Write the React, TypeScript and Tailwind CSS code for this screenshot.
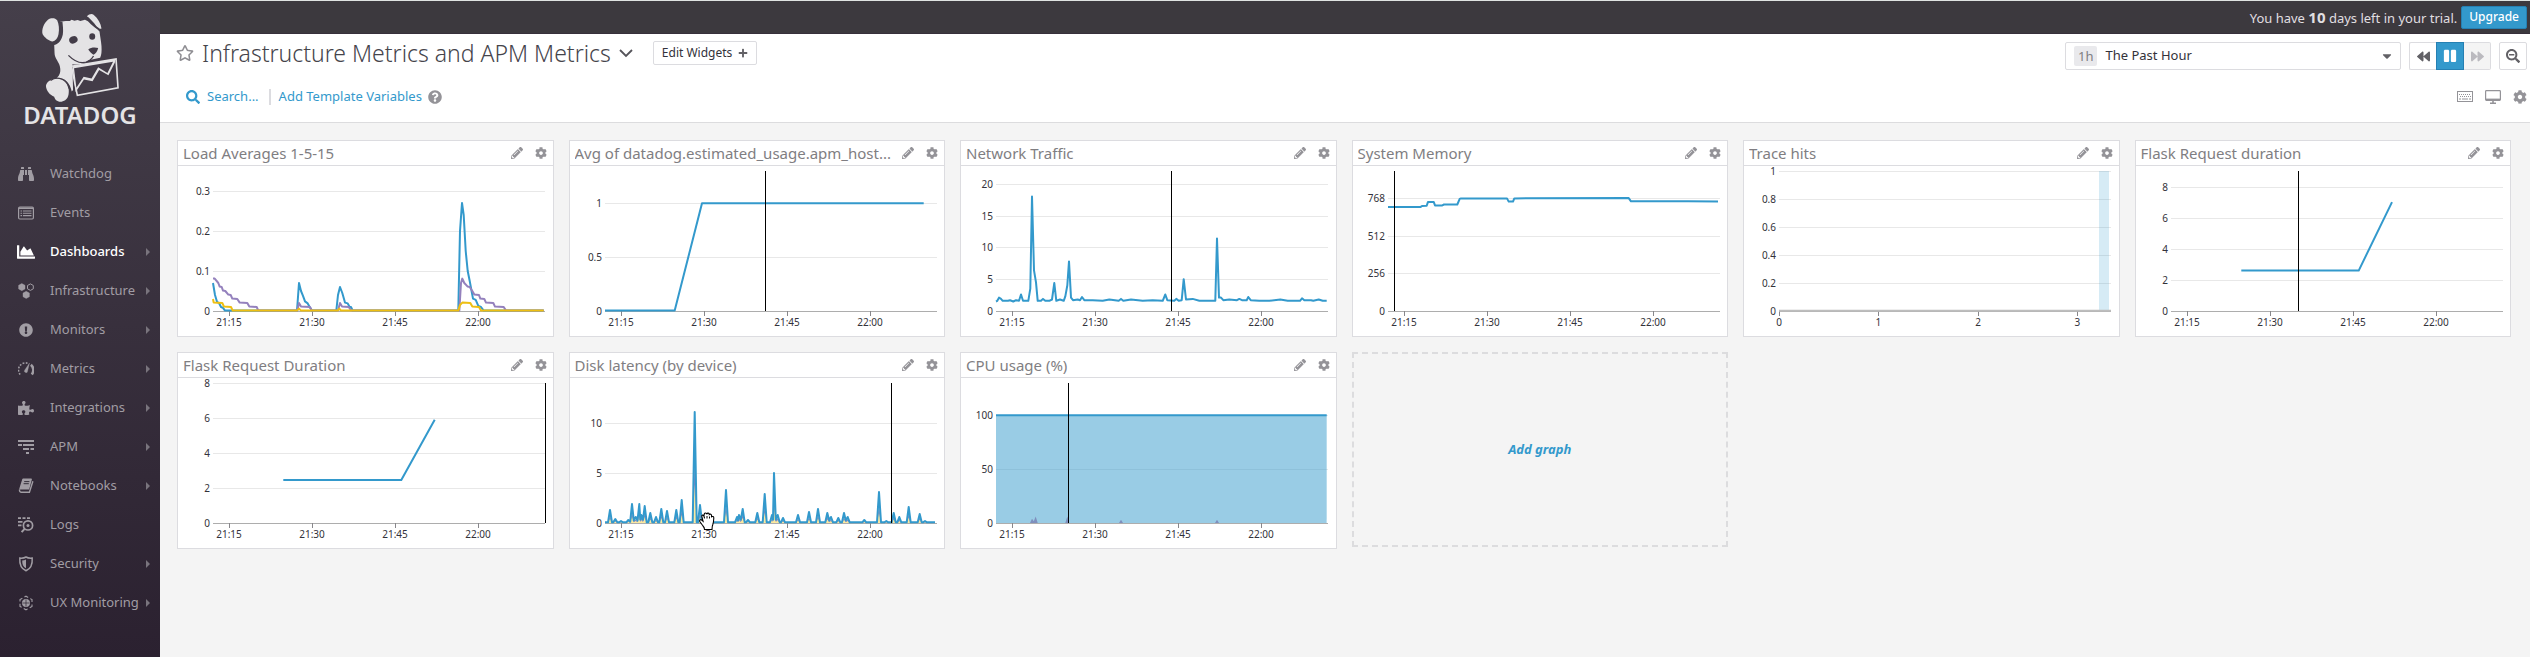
import { useEffect, useRef, useState } from "react";
import type { ReactNode } from "react";
import {
  FaBackward,
  FaBinoculars,
  FaCaretDown,
  FaChartArea,
  FaCog,
  FaExclamationCircle,
  FaForward,
  FaPause,
  FaPencilAlt,
  FaPlus,
  FaPuzzlePiece,
  FaQuestionCircle,
  FaRegStar,
  FaSearch,
  FaSearchMinus,
} from "react-icons/fa";

/* ---------- icons ---------- */

const EventsIcon = () => (
  <svg viewBox="0 0 16 16" className="h-4 w-4" fill="none" stroke="currentColor">
    <rect x="0.6" y="2" width="14.8" height="12" rx="1.2" strokeWidth="1.2" />
    <path d="M1 3.2h14" strokeWidth="1.6" />
    <path d="M2.5 6h1.6M5 6h8.5M2.5 8.3h1.6M5 8.3h8.5M2.5 10.6h1.6M5 10.6h8.5" strokeWidth="1.1" />
  </svg>
);

const InfrastructureIcon = () => (
  <svg viewBox="0 0 16 16" className="h-4 w-4" fill="currentColor" stroke="currentColor">
    <path d="M3.8.5 7 2.3v3.6L3.8 7.7.6 5.9V2.3z" strokeWidth=".4" />
    <path d="M12.4.9 15.3 2.5v3.3l-2.9 1.6-2.9-1.6V2.5z" fill="none" strokeWidth="1" />
    <path d="m8.2 8.3 3.2 1.8v3.6l-3.2 1.8L5 13.7v-3.6z" strokeWidth=".4" />
  </svg>
);

const MetricsIcon = () => (
  <svg viewBox="0 0 16 16" className="h-4 w-4" fill="none" stroke="currentColor">
    <path d="M2.2 13.5A7 7 0 0 1 9.5 2.2" strokeWidth="1.6" strokeDasharray="1.8 1.4" />
    <path d="M12.9 3.8a7 7 0 0 1 .9 9.7" strokeWidth="2.6" />
    <path d="M11.5 2 9.6 10a1.6 1.6 0 1 1-3-.8z" fill="currentColor" strokeWidth=".3" />
  </svg>
);

const ApmIcon = () => (
  <svg viewBox="0 0 16 16" className="h-4 w-4" fill="currentColor">
    <path d="M0 1h16v2H0zM0 5h4v2H0zM5 5h11v2H5zM5 9h6v2H5zM12.5 9H16v2h-3.5zM8 13h3v2H8z" />
  </svg>
);

const NotebookIcon = () => (
  <svg viewBox="0 0 16 16" className="h-4 w-4" fill="none" stroke="currentColor">
    <path d="M5 1.2h8.2l-2.6 9.6H2z" fill="currentColor" strokeWidth="1.4" strokeLinejoin="round" />
    <path d="M1.6 11.4c-.4 1.8.4 2.8 1.4 2.8h8.4l3.5-11" strokeWidth="1.4" />
    <path d="M6.2 3.6h5.2M5.6 5.7h5.2" stroke="#36303b" strokeWidth="1" />
  </svg>
);

const LogsIcon = () => (
  <svg viewBox="0 0 16 16" className="h-4 w-4" fill="none" stroke="currentColor">
    <path d="M0 1.2h3M4.5 1.2h3M9 1.2h3M0 4.8h4.5M0 8.4h3.5" strokeWidth="1.8" />
    <circle cx="10" cy="8.4" r="4.6" strokeWidth="1.7" />
    <path d="m6.6 11.8-3 3.4" strokeWidth="2" />
    <circle cx="10" cy="8.4" r="1.5" fill="currentColor" stroke="none" />
  </svg>
);

const SecurityIcon = () => (
  <svg viewBox="0 0 16 16" className="h-4 w-4" fill="none" stroke="currentColor">
    <path d="M8 1c2 1.2 4 1.3 6.2 1.1C14.6 8 13.5 12.5 8 14.8 2.5 12.5 1.4 8 1.8 2.1 4 2.3 6 2.2 8 1z" strokeWidth="1.5" />
    <path d="M8 3.4v8.9C5 10.9 4.2 8.2 4.2 4.4 5.6 4.4 6.8 4.1 8 3.4z" fill="currentColor" stroke="none" />
  </svg>
);

const UxIcon = () => (
  <svg viewBox="0 0 16 16" className="h-4 w-4" fill="none" stroke="currentColor">
    <path d="m8 1.2 6 3.4v6.8l-6 3.4-6-3.4V4.6z" strokeWidth="1.1" strokeDasharray="4.5 2.4" strokeDashoffset="2" />
    <circle cx="8" cy="8" r="3.7" fill="currentColor" strokeWidth=".8" />
    <path d="M8 4.5v7M4.5 8h7" stroke="#2e2533" strokeWidth=".7" />
  </svg>
);

const KeyboardIcon = () => (
  <svg viewBox="0 0 16 12" className="h-3 w-4" fill="none" stroke="currentColor">
    <rect x="0.5" y="0.5" width="15" height="10" />
    <path d="M2 3.5h12M3 5.5h11" strokeDasharray="1 1" />
    <path d="M2 8h2M5 8h6M12 8h2" />
  </svg>
);

const MonitorIcon = () => (
  <svg viewBox="0 0 16 14" className="h-3.5 w-4" fill="none" stroke="currentColor">
    <rect x="0.6" y="0.6" width="14.8" height="9.8" rx="0.8" strokeWidth="1.2" />
    <path d="M1 9.6h14" strokeWidth="2" />
    <path d="M8 10.5v2.5M5 13.2h6" strokeWidth="1.6" />
  </svg>
);

const ChevronIcon = () => (
  <svg viewBox="0 0 14 9" className="h-[9px] w-3.5" fill="none" stroke="currentColor" strokeWidth="1.8">
    <path d="m1 1 6 6 6-6" />
  </svg>
);

const DogLogo = () => (
  <svg viewBox="126 36 242 272" className="h-[90px] w-20" aria-hidden="true">
    <g fill="#e4e3e5">
      <path d="M150 56c9-6 22-6 28 2 5 12 7 26 4 42-2 12-10 20-18 22-12-2-24-12-30-22-4-14 4-34 16-44z" />
      <path d="M184 63c12-2 22-4 32-3l6-4 8 3 10-2 8 3 14-4c6 2 12 6 18 14 6 4 14 12 20 16l6 6c2 16 5 30 6 44 1 16 0 28-4 35l-36 8c-12 12-30 14-48 12l2 78-4 4c-4-24-20-40-46-40 10-8 14-20 10-36-2-12-16-24-16-40l-1-24c16-4 22-16 26-32 2-14 0-26-1-38z" />
      <path d="M268 46c6-6 14-9 20-5 14 12 22 26 24 42-6 2-12-2-16-8-8-10-16-20-28-29z" />
      <path d="M144 256c2-14 18-22 36-22 18 2 30 14 33 34 1 20-4 32-22 36-14 1-20-7-22-15-12-4-25-18-25-33z" />
    </g>
    <g fill="#433c48">
      <ellipse cx="227" cy="117" rx="13" ry="11" transform="rotate(-25 227 117)" />
      <ellipse cx="284" cy="107" rx="9" ry="10" />
      <path d="M272 146c8-6 20-7 30-4-2 10-8 18-14 20-6-4-12-10-16-16z" />
    </g>
    <path d="M212 164c14 14 28 22 42 22 16 0 26-6 34-20" fill="none" stroke="#433c48" strokeWidth="4" />
    <path d="M158 240c18-14 52-6 56 24M270 50c8 14 20 26 34 34" fill="none" stroke="#433c48" strokeWidth="4" />
    <path d="m221 197 135-22 6 87-123 23z" fill="#433c48" stroke="#e4e3e5" strokeWidth="5" />
    <path d="m224 197 130-22-1 10-20 39-28-16-20 34-26-5-25 38z" fill="#e4e3e5" />
    <path d="m229 203 118-20-17 34-28-17-20 34-24-5-22 33z" fill="#433c48" />
  </svg>
);

/* ---------- sidebar ---------- */

type NavItem = { label: string; icon: ReactNode; arrow?: boolean; active?: boolean };

const NAV: NavItem[] = [
  { label: "Watchdog", icon: <FaBinoculars className="h-4 w-4" /> },
  { label: "Events", icon: <EventsIcon /> },
  { label: "Dashboards", icon: <FaChartArea className="h-[18px] w-[18px]" />, arrow: true, active: true },
  { label: "Infrastructure", icon: <InfrastructureIcon />, arrow: true },
  { label: "Monitors", icon: <FaExclamationCircle className="h-3.5 w-3.5" />, arrow: true },
  { label: "Metrics", icon: <MetricsIcon />, arrow: true },
  { label: "Integrations", icon: <FaPuzzlePiece className="h-4 w-4" />, arrow: true },
  { label: "APM", icon: <ApmIcon />, arrow: true },
  { label: "Notebooks", icon: <NotebookIcon />, arrow: true },
  { label: "Logs", icon: <LogsIcon /> },
  { label: "Security", icon: <SecurityIcon />, arrow: true },
  { label: "UX Monitoring", icon: <UxIcon />, arrow: true },
];

function Sidebar() {
  return (
    <aside className="flex w-40 shrink-0 flex-col bg-linear-to-b from-[#453f4a] to-[#2b2130] pt-3">
      <a href="#home" className="flex flex-col items-center text-[#e4e3e5]">
        <DogLogo />
        <span className="text-2xl leading-6 font-semibold">DATADOG</span>
      </a>
      <nav className="mt-[27px]">
        <ul>
          {NAV.map((item) => (
            <li key={item.label}>
              <a
                href={"#" + item.label}
                className={
                  item.active
                    ? "flex h-[39px] items-center pr-2.5 pl-4 text-[13px] font-medium text-white"
                    : "flex h-[39px] items-center pr-2.5 pl-4 text-[13px] text-[#a19da4]"
                }
              >
                <span className="mr-[15px] flex w-[19px] justify-center">{item.icon}</span>
                <span className="grow whitespace-nowrap">{item.label}</span>
                {item.arrow && (
                  <svg viewBox="0 0 4 8" className="h-2 w-1 fill-[#79747d]">
                    <path d="M0 0l4 4-4 4z" />
                  </svg>
                )}
              </a>
            </li>
          ))}
        </ul>
      </nav>
    </aside>
  );
}

/* ---------- charts ---------- */

type Tick = [number, string];
type Series = { points: number[][]; color?: string; area?: string };
type ChartSpec = {
  max: number;
  yTicks: number[];
  xTicks?: Tick[];
  series: Series[];
  cursor?: number;
  band?: [number, number];
  hand?: boolean;
};

/* Horizontal positions run from 0 to SPAN over the last hour. */
const SPAN = 996;
const HOUR_TICKS: Tick[] = [
  [48, "21:15"],
  [297, "21:30"],
  [546, "21:45"],
  [795, "22:00"],
];
const BLUE = "#3399cc";
const PURPLE = "#9481bd";
const YELLOW = "#eebf12";

function peaks(list: number[][], base: number, end: number, half: number) {
  const out: number[][] = [[0, base]];
  list.forEach(([x, v], i) => {
    const prev = list[i - 1];
    if (!prev || x - prev[0] > half * 2) out.push([x - half, base]);
    else out.push([(x + prev[0]) / 2, Math.max(base, Math.min(v, prev[1]) * 0.4)]);
    out.push([x, v]);
    const next = list[i + 1];
    if (!next || next[0] - x > half * 2) out.push([x + half, base]);
  });
  out.push([end, base]);
  return out;
}

function Chart({ spec, label }: { spec: ChartSpec; label: string }) {
  const box = useRef<HTMLDivElement>(null);
  const [width, setWidth] = useState(375);
  useEffect(() => {
    const el = box.current;
    if (!el) return;
    const update = () => setWidth(Math.round(el.clientWidth));
    update();
    const observer = new ResizeObserver(update);
    observer.observe(el);
    return () => observer.disconnect();
  }, []);

  const left = 35;
  const right = width - 8;
  const bottom = 145;
  const px = (x: number) => left + (x / SPAN) * (right - left);
  const py = (v: number) => bottom - (v / spec.max) * 140;
  const line = (pts: number[][]) => pts.map(([x, v]) => px(x).toFixed(1) + "," + py(v).toFixed(1)).join(" ");

  return (
    <div ref={box} className="h-[170px] w-full">
      <svg width="100%" height="170" role="img" aria-label={label} className="block overflow-visible">
        {spec.yTicks.map((t) => (
          <g key={t}>
            <path
              d={`M${left} ${Math.round(py(t)) + 0.5}H${right}`}
              stroke={t === 0 ? "#adadad" : "#e8e8e8"}
              strokeWidth="1"
              shapeRendering="crispEdges"
            />
            <text x={left - 3} y={Math.round(py(t)) + 4} textAnchor="end" className="fill-[#33323a] text-[10px]">
              {t}
            </text>
          </g>
        ))}
        {(spec.xTicks || HOUR_TICKS).map(([x, text]) => (
          <g key={text}>
            <path d={`M${Math.floor(px(x)) + 0.5} 145v5`} stroke="#88878b" strokeWidth="1" shapeRendering="crispEdges" />
            <text x={px(x)} y="160" textAnchor="middle" className="fill-[#33323a] text-[10px]">
              {text}
            </text>
          </g>
        ))}
        {spec.band && (
          <rect x={px(spec.band[0])} y="5" width={px(spec.band[1]) - px(spec.band[0])} height="140" fill={BLUE} opacity="0.2" />
        )}
        {spec.series.map((s, i) => (
          <g key={i}>
            {s.area && (
              <polygon
                points={`${px(s.points[0][0])},${bottom} ${line(s.points)} ${px(s.points[s.points.length - 1][0])},${bottom}`}
                fill={s.area}
              />
            )}
            {s.color && (
              <polyline points={line(s.points)} fill="none" stroke={s.color} strokeWidth="2" strokeLinejoin="round" />
            )}
          </g>
        ))}
        {spec.cursor !== undefined && (
          <rect x={Math.floor(px(spec.cursor))} y="5" width="1" height="140" fill="#000" shapeRendering="crispEdges" />
        )}
        {spec.hand && (
          <g transform="translate(129 134)">
            <path
              d="M5.5 17.5c0-1.5-.5-2.5-1.5-3.5L.8 9.5C.2 8.3 1.5 7 2.7 8L4 9.2 2.8 4.500C2.5 3 4.3 2.500 4.9 4L5.3 2C5.800.6 7.500.7 7.700 2.200 8.300.6 10.300.9 10.300 2.500c1-.8 2.200-.3 2.300 1v1.300c1-.7 2.300-.2 2.200 1.200-.1 2.500-.3 4.500-1 6.500-.7 1.500-.8 3-.8 5z"
              fill="#fff"
              stroke="#000"
              strokeWidth="1.100"
            />
            <path d="M5.400 4.500v2M8 4v2.500M10.500 4.500v2" stroke="#000" strokeWidth="1" />
          </g>
        )}
      </svg>
    </div>
  );
}

const LOAD: ChartSpec = {
  max: 0.35,
  yTicks: [0, 0.1, 0.2, 0.3],
  series: [
    {
      color: BLUE,
      points: [[0, 0.07], [6, 0.04], [12, 0.023], [18, 0.02], [24, 0.01], [30, 0.008], [36, 0.001], [252, 0.001], [258, 0.07], [264, 0.05], [270, 0.038], [276, 0.024], [284, 0.019], [290, 0.01], [297, 0.001], [370, 0.001], [375, 0.04], [381, 0.06], [388, 0.045], [396, 0.021], [404, 0.019], [410, 0.01], [414, 0.01], [419, 0.001], [736, 0.001], [741, 0.2], [747, 0.27], [752, 0.24], [758, 0.15], [764, 0.1], [770, 0.075], [780, 0.031], [788, 0.028], [796, 0.013], [804, 0.01], [812, 0.001], [992, 0.001]],
    },
    {
      color: PURPLE,
      points: [[0, 0.081], [5, 0.081], [16, 0.07], [20, 0.061], [26, 0.06], [30, 0.051], [37, 0.05], [46, 0.041], [53, 0.04], [58, 0.031], [73, 0.03], [80, 0.021], [103, 0.02], [109, 0.011], [131, 0.01], [136, 0.001], [253, 0.001], [258, 0.02], [264, 0.011], [291, 0.01], [296, 0.001], [375, 0.001], [381, 0.02], [387, 0.011], [407, 0.01], [415, 0.001], [739, 0.001], [744, 0.07], [748, 0.081], [754, 0.07], [764, 0.061], [770, 0.06], [778, 0.05], [784, 0.041], [798, 0.04], [802, 0.031], [814, 0.03], [819, 0.021], [841, 0.02], [846, 0.011], [872, 0.01], [879, 0.001], [992, 0.001]],
    },
    {
      color: YELLOW,
      points: [[0, 0.03], [2, 0.021], [28, 0.02], [33, 0.011], [54, 0.01], [59, 0.001], [252, 0.001], [258, 0.006], [264, 0.001], [374, 0.001], [379, 0.006], [384, 0.001], [736, 0.001], [741, 0.015], [748, 0.021], [772, 0.02], [778, 0.011], [798, 0.01], [804, 0.001], [992, 0.001]],
    },
  ],
};

const HOSTS: ChartSpec = {
  max: 1.3,
  yTicks: [0, 0.5, 1],
  cursor: 481,
  series: [{ color: BLUE, points: [[0, 0.005], [209, 0.005], [291, 1], [956, 1]] }],
};

const NETWORK: ChartSpec = {
  max: 22,
  yTicks: [0, 5, 10, 15, 20],
  cursor: 526,
  series: [
    {
      color: BLUE,
      points: [[0, 1.5], [4, 1.6], [9, 2.1], [15, 1.9], [20, 1.6], [36, 1.6], [42, 1.7], [52, 1.5], [60, 1.7], [69, 1.6], [75, 2.6], [81, 1.6], [97, 1.6], [103, 3.5], [108, 18], [114, 6.4], [120, 4.5], [125, 1.6], [135, 1.6], [141, 1.9], [148, 1.6], [160, 1.6], [168, 1.8], [175, 4.4], [181, 1.6], [192, 1.8], [203, 1.6], [208, 2.3], [214, 4], [219, 7.8], [225, 2.1], [231, 1.7], [245, 1.8], [252, 1.7], [258, 2.2], [265, 1.7], [290, 1.7], [320, 1.6], [340, 1.8], [368, 1.6], [375, 1.9], [382, 1.6], [405, 1.8], [440, 1.6], [470, 1.7], [500, 1.6], [508, 2.6], [514, 1.7], [535, 1.6], [541, 1.9], [548, 1.6], [557, 1.7], [563, 5], [570, 1.8], [590, 1.9], [610, 1.6], [658, 1.6], [663, 11.4], [669, 2.1], [675, 2.1], [682, 1.7], [700, 1.8], [723, 1.7], [730, 1.9], [738, 1.7], [752, 1.7], [757, 2.2], [764, 1.7], [790, 1.6], [820, 1.6], [853, 1.8], [875, 1.6], [912, 1.6], [918, 2], [925, 1.7], [945, 1.7], [952, 1.6], [968, 1.8], [980, 1.6], [992, 1.6]],
    },
  ],
};

const MEMORY: ChartSpec = {
  max: 952,
  yTicks: [0, 256, 512, 768],
  cursor: 19,
  series: [
    {
      color: BLUE,
      points: [[0, 708], [98, 708], [102, 714], [116, 716], [120, 742], [137, 742], [141, 718], [163, 718], [168, 724], [208, 724], [215, 762], [219, 766], [357, 766], [362, 744], [375, 744], [379, 766], [722, 768], [729, 746], [900, 746], [990, 744]],
    },
  ],
};

const TRACE: ChartSpec = {
  max: 1,
  yTicks: [0, 0.2, 0.4, 0.6, 0.8, 1],
  xTicks: [[0, "0"], [298, "1"], [597, "2"], [895, "3"]],
  band: [960, 990],
  series: [{ color: "#bdbdbd", points: [[0, 0.002], [996, 0.002]] }],
};

const FLASK_A: ChartSpec = {
  max: 9,
  yTicks: [0, 2, 4, 6, 8],
  cursor: 382,
  series: [{ color: BLUE, points: [[211, 2.6], [563, 2.6], [663, 7]] }],
};

const FLASK_B: ChartSpec = {
  max: 8,
  yTicks: [0, 2, 4, 6, 8],
  cursor: 997,
  series: [{ color: BLUE, points: [[211, 2.45], [565, 2.45], [665, 5.9]] }],
};

const DISK_PEAKS = [
  [15, 1.3], [31, 0.4], [48, 0.2], [70, 0.3], [81, 1.9], [92, 0.6], [103, 1.9], [109, 0.8], [119, 1.7], [136, 1], [153, 0.6], [169, 1.4], [186, 1.2],
  [214, 1.3], [230, 2.3], [269, 11.1], [285, 1.8], [302, 0.9], [363, 3.3], [396, 0.6], [402, 0.8], [413, 1.4], [429, 0.3],
  [457, 1], [479, 2.9], [501, 0.8], [507, 5], [518, 0.8], [534, 0.5], [579, 0.8], [612, 1.1], [639, 1.4], [667, 1],
  [678, 0.6], [700, 0.5], [717, 1], [728, 0.6], [778, 0.3], [822, 3.1], [844, 0.2], [866, 1], [883, 0.6], [911, 1.6], [944, 0.9], [960, 0.2],
];

const DISK: ChartSpec = {
  max: 14,
  yTicks: [0, 5, 10],
  cursor: 860,
  hand: true,
  series: [
    { area: "#9481bd", points: peaks(DISK_PEAKS.map(([x, v]) => [x, v * 0.6]), 0, 990, 6) },
    { area: "#fbe9a0", points: peaks(DISK_PEAKS.map(([x, v]) => [x, v * 0.35]), 0, 990, 6) },
    { color: BLUE, points: peaks(DISK_PEAKS, 0.07, 990, 6) },
  ],
};

const CPU: ChartSpec = {
  max: 130,
  yTicks: [0, 50, 100],
  cursor: 217,
  series: [
    { color: BLUE, area: "rgba(51,153,204,0.5)", points: [[0, 100], [992, 100]] },
    {
      area: "#7f8fbd",
      points: peaks([[108, 4], [119, 6], [214, 6], [375, 3], [663, 3]], 0, 990, 6),
    },
  ],
};

const CARDS: { title: string; spec: ChartSpec }[] = [
  { title: "Load Averages 1-5-15", spec: LOAD },
  { title: "Avg of datadog.estimated_usage.apm_host...", spec: HOSTS },
  { title: "Network Traffic", spec: NETWORK },
  { title: "System Memory", spec: MEMORY },
  { title: "Trace hits", spec: TRACE },
  { title: "Flask Request duration", spec: FLASK_A },
  { title: "Flask Request Duration", spec: FLASK_B },
  { title: "Disk latency (by device)", spec: DISK },
  { title: "CPU usage (%)", spec: CPU },
];

function Card({ title, spec }: { title: string; spec: ChartSpec }) {
  return (
    <section className="min-w-0 border border-[#dcdce0] bg-white">
      <header className="flex h-[25px] items-center border-b border-[#dcdce0] pr-1.5 pl-[5px]">
        <h2 className="min-w-0 grow truncate text-[15px] leading-6 text-[#7f7e82]">{title}</h2>
        <button type="button" aria-label={"Edit " + title} className="ml-1 text-[#949398]">
          <FaPencilAlt className="h-3 w-3" />
        </button>
        <button type="button" aria-label={"Settings for " + title} className="ml-3 text-[#949398]">
          <FaCog className="h-3 w-3" />
        </button>
      </header>
      <Chart spec={spec} label={title} />
    </section>
  );
}

/* ---------- page ---------- */

function TrialBar() {
  return (
    <div className="flex h-[33px] items-center justify-end gap-1 border-b border-[#37303b] bg-[#3c393e] pr-[3px] text-[13px] text-[#e0dfe1]">
      <p>
        You have <strong className="text-[15px]">10</strong> days left in your trial.
      </p>
      <button type="button" className="h-[23px] rounded-xs border border-[#2580b3] bg-[#3399cc] px-[7px] text-xs font-medium text-white">
        Upgrade
      </button>
    </div>
  );
}

function PageHeader() {
  return (
    <header className="h-[89px] border-b border-[#dcdcde] bg-white pr-[3px] pl-4">
      <div className="flex h-[38px] items-center">
        <button type="button" aria-label="Add to favorites" className="mr-2 text-[#8e8d92]">
          <FaRegStar className="h-[18px] w-[18px]" />
        </button>
        <h1 className="text-[23px] leading-8 font-light whitespace-nowrap text-[#45444b]">
          Infrastructure Metrics and APM Metrics
        </h1>
        <button type="button" aria-label="Switch dashboard" className="ml-2 text-[#55545a]">
          <ChevronIcon />
        </button>
        <button
          type="button"
          className="ml-5 flex h-6 items-center gap-1.5 rounded-xs border border-[#dcdce0] px-2 text-xs text-[#33323a]"
        >
          Edit Widgets <FaPlus className="h-2.5 w-2.5 text-[#626166]" />
        </button>
        <div className="mt-1.5 ml-auto flex items-center gap-2">
          <label className="flex h-7 w-[336px] items-center rounded-xs border border-[#dcdce0] px-2">
            <span className="mr-2 rounded-xs bg-[#e9e9ec] px-1 text-[13px] leading-5 text-[#7f7e82]">1h</span>
            <select aria-label="Time range" className="grow appearance-none bg-transparent text-[13px] text-[#33323a]">
              <option>The Past Hour</option>
            </select>
            <FaCaretDown className="h-3.5 w-2.5 text-[#626166]" />
          </label>
          <div className="flex h-7">
            <button type="button" aria-label="Back" className="flex w-[27px] items-center justify-center rounded-l-xs border border-r-0 border-[#dcdce0] text-[#626166]">
              <FaBackward className="h-[13px] w-[13px]" />
            </button>
            <button type="button" aria-label="Pause" className="flex w-7 items-center justify-center border border-[#2580b3] bg-[#3399cc] text-white">
              <FaPause className="h-3.5 w-3.5" />
            </button>
            <button type="button" aria-label="Forward" className="flex w-[27px] items-center justify-center rounded-r-xs border border-l-0 border-[#dcdce0] bg-[#f4f4f4] text-[#bbbabf]">
              <FaForward className="h-[13px] w-[13px]" />
            </button>
          </div>
          <button type="button" aria-label="Zoom out" className="flex h-7 w-7 items-center justify-center rounded-xs border border-[#dcdce0] text-[#626166]">
            <FaSearchMinus className="h-3.5 w-3.5" />
          </button>
        </div>
      </div>
      <div className="flex h-[50px] items-center pl-2.5 text-[13px] text-[#3399cc]">
        <button type="button" className="flex items-center gap-[7px]">
          <FaSearch className="h-3.5 w-3.5" /> Search...
        </button>
        <span className="mr-2 ml-2.5 h-4 w-0.5 bg-[#dcdce0]" />
        <a href="#variables">Add Template Variables</a>
        <FaQuestionCircle className="ml-1.5 h-3.5 w-3.5 text-[#949398]" />
        <div className="ml-auto flex items-center gap-3 text-[#949398]">
          <button type="button" aria-label="Keyboard shortcuts">
            <KeyboardIcon />
          </button>
          <button type="button" aria-label="TV mode">
            <MonitorIcon />
          </button>
          <button type="button" aria-label="Dashboard settings">
            <FaCog className="h-3.5 w-3.5" />
          </button>
        </div>
      </div>
    </header>
  );
}

export default function App() {
  return (
    <div className="flex min-h-screen border-t border-[#dfe3e1] font-['Noto_Sans',sans-serif]">
      <Sidebar />
      <div className="flex min-w-0 grow flex-col bg-[#f4f4f4]">
        <TrialBar />
        <PageHeader />
        <main className="grid grid-cols-6 gap-[15px] pt-[17px] pr-[19px] pb-8 pl-[17px]">
          {CARDS.map((card) => (
            <Card key={card.title} title={card.title} spec={card.spec} />
          ))}
          <button type="button" className="mb-0.5 border-2 border-dashed border-[#dcdcde] text-[13px] font-bold text-[#3399cc] italic">
            Add graph
          </button>
        </main>
      </div>
    </div>
  );
}
